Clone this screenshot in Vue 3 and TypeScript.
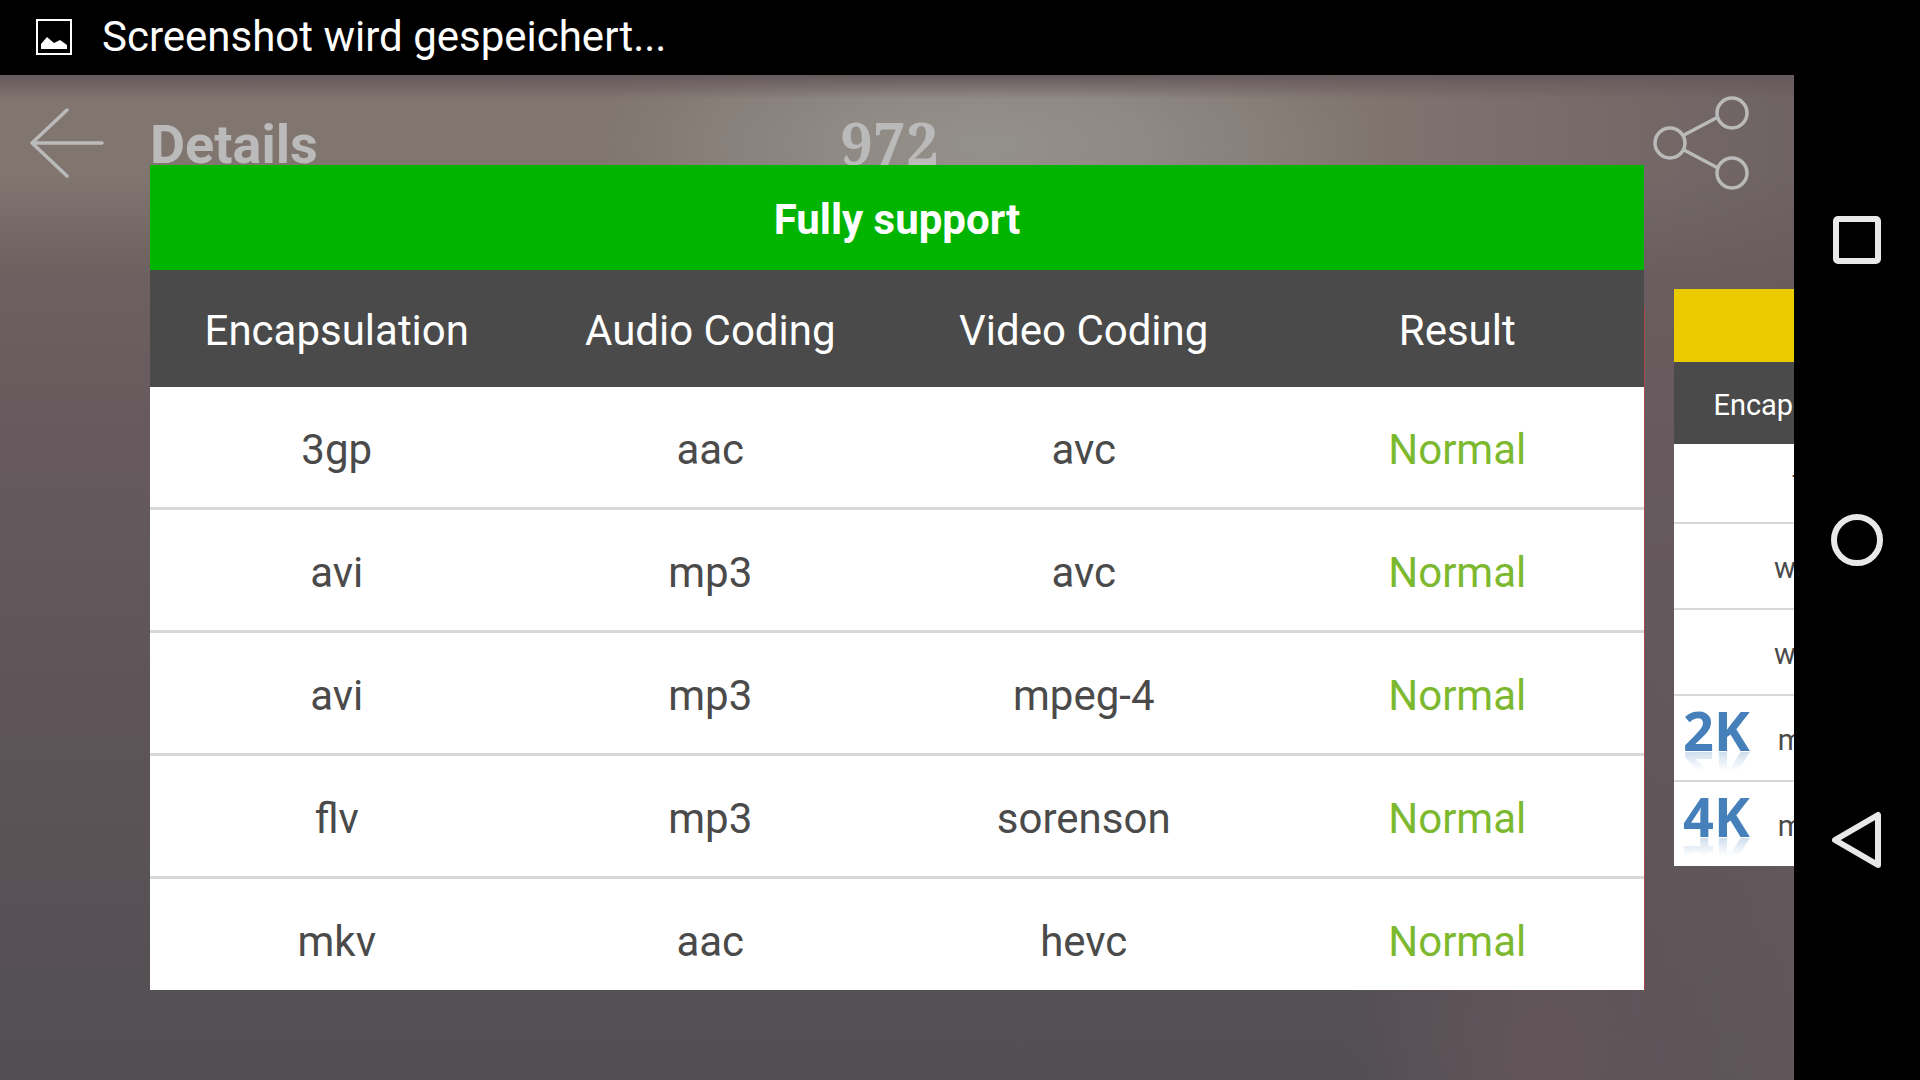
<script setup lang="ts">
interface Row {
  format: string
  audio: string
  video: string
  result: string
  badge?: string
}

const columns: string[] = ['Encapsulation', 'Audio Coding', 'Video Coding', 'Result']

const supported: Row[] = [
  { format: '3gp', audio: 'aac', video: 'avc', result: 'Normal' },
  { format: 'avi', audio: 'mp3', video: 'avc', result: 'Normal' },
  { format: 'avi', audio: 'mp3', video: 'mpeg-4', result: 'Normal' },
  { format: 'flv', audio: 'mp3', video: 'sorenson', result: 'Normal' },
  { format: 'mkv', audio: 'aac', video: 'hevc', result: 'Normal' },
]

// Only the first column of the next card peeks in from the right.
const partial: Pick<Row, 'format' | 'badge'>[] = [
  { format: 'ts' },
  { format: 'wmv' },
  { format: 'wmv' },
  { format: 'mkv', badge: '2K' },
  { format: 'mkv', badge: '4K' },
]
</script>

<template>
  <div class="screen">
    <header class="status">
      <svg class="status-icon" viewBox="0 0 36 36" aria-hidden="true">
        <rect x="1" y="1" width="34" height="34" fill="none" stroke="#fff" stroke-width="2" />
        <path d="M5 30V25L11 18L18 24L24 21L31 26V30Z" fill="#fff" />
      </svg>
      <span>Screenshot wird gespeichert...</span>
    </header>

    <main class="stage">
      <div class="appbar">
        <div class="appbar-left">
          <button class="icon-btn" type="button" aria-label="Back">
            <svg width="75" height="72" viewBox="0 0 75 72">
              <path d="M37 3L2 36L37 69M2 36H72" fill="none" stroke="#bababa" stroke-width="3.5" stroke-linecap="round" stroke-linejoin="round" />
            </svg>
          </button>
          <h1 class="title">Details</h1>
        </div>
        <span class="score">972</span>
        <button class="icon-btn share" type="button" aria-label="Share">
          <svg width="96" height="94" viewBox="0 0 96 94">
            <g fill="none" stroke="#bababa" stroke-width="3.5">
              <circle cx="17" cy="47" r="15" />
              <circle cx="79" cy="17" r="15" />
              <circle cx="79" cy="77" r="15" />
              <path d="M31 39L65 21M31 54L65 72" />
            </g>
          </svg>
        </button>
      </div>

      <div class="carousel">
        <section class="card main-card">
          <div class="clip">
            <table>
              <caption>Fully support</caption>
              <thead>
                <tr><th v-for="c in columns" :key="c" scope="col">{{ c }}</th></tr>
              </thead>
              <tbody>
                <tr v-for="(r, i) in supported" :key="i">
                  <td>{{ r.format }}</td>
                  <td>{{ r.audio }}</td>
                  <td>{{ r.video }}</td>
                  <td class="ok">{{ r.result }}</td>
                </tr>
              </tbody>
            </table>
          </div>
        </section>

        <section class="card side-card">
          <div class="clip">
            <table>
              <caption></caption>
              <thead>
                <tr>
                  <th scope="col">{{ columns[0] }}</th>
                  <th colspan="3"></th>
                </tr>
              </thead>
              <tbody>
                <tr v-for="(r, i) in partial" :key="i">
                  <td>
                    <span v-if="r.badge" class="badge">{{ r.badge }}</span>
                    {{ r.format }}
                  </td>
                  <td colspan="3"></td>
                </tr>
              </tbody>
            </table>
          </div>
        </section>
      </div>
    </main>

    <nav class="nav">
      <button type="button" aria-label="Recent apps">
        <svg width="60" height="60" viewBox="0 0 60 60">
          <rect x="9" y="9" width="42" height="42" rx="2" fill="none" stroke="#e8e8e8" stroke-width="6" />
        </svg>
      </button>
      <button type="button" aria-label="Home">
        <svg width="60" height="60" viewBox="0 0 60 60">
          <circle cx="30" cy="30" r="23" fill="none" stroke="#e8e8e8" stroke-width="6" />
        </svg>
      </button>
      <button type="button" aria-label="Back">
        <svg width="60" height="60" viewBox="0 0 60 60">
          <path d="M51 5V55L8 30Z" fill="none" stroke="#e8e8e8" stroke-width="6" stroke-linejoin="round" />
        </svg>
      </button>
    </nav>
  </div>
</template>

<style>
body {
  margin: 0;
  background: #000;
}
</style>

<style scoped>
.screen {
  display: grid;
  grid-template: 75px minmax(0, 1fr) / minmax(0, 1fr) 126px;
  height: 100vh;
  font-family: Roboto, "Liberation Sans", sans-serif;
  font-size: 42px;
  color: #4a4a4a;
  background: #000;
}

button {
  border: 0;
  padding: 0;
  background: none;
}

svg {
  display: block;
}

.status {
  grid-column: 1 / -1;
  display: flex;
  align-items: center;
  gap: 30px;
  padding: 0 36px 2px;
  color: #fff;
}

.status-icon {
  width: 36px;
  height: 36px;
}

.stage {
  display: flex;
  flex-direction: column;
  min-height: 0;
  overflow: hidden;
  background:
    linear-gradient(#66595c 0, #66595c00 24px),
    radial-gradient(ellipse 22% 15% at 55% 7%, #94908a 0, #94908ac0 40%, #94908a00 100%),
    radial-gradient(ellipse 10% 24% at 86% 98%, #62555a 0, #62555a00 100%),
    linear-gradient(90deg, #80756f00 75%, #665a5eb0 100%),
    linear-gradient(#80756f 0, #80756f 10%, #6c6060 20%, #665a5e 35%, #5f5558 60%, #575155 85%, #524e52 100%);
}

.appbar {
  display: grid;
  grid-template-columns: 1fr auto 1fr;
  align-items: center;
  height: 135px;
  flex: none;
  padding: 0 45px 0 30px;
  color: #bababa;
}

.appbar-left {
  display: flex;
  align-items: center;
  gap: 45px;
}

.title {
  margin: 0;
  padding-top: 3px;
  font-size: 54px;
  font-weight: 700;
}

.score {
  font: 700 58px "Noto Serif", "Liberation Serif", serif;
}

.share {
  justify-self: end;
}

.carousel {
  position: relative;
  display: flex;
  flex: 1;
  align-items: center;
  gap: 30px;
  min-height: 0;
  margin-top: -45px;
  padding: 0 150px 90px;
}

.card {
  position: relative;
  flex: none;
}

.main-card {
  width: 100%;
  height: 100%;
}

.main-card::after {
  content: "";
  position: absolute;
  top: 142px;
  bottom: 0;
  left: 100%;
  width: 1px;
  background: #b04548;
}

.side-card {
  width: 70%;
  height: 70%;
  font-size: 29px;
}

.clip {
  height: 100%;
  overflow: hidden;
  background: #fff;
}

table {
  width: 100%;
  table-layout: fixed;
  border-collapse: separate;
  border-spacing: 0;
  text-align: center;
}

caption {
  height: 105px;
  line-height: 110px;
  font-weight: 700;
  color: #fff;
  background: #00b400;
}

th {
  box-sizing: border-box;
  height: 117px;
  padding: 4px 0 0;
  font-weight: 400;
  color: #fff;
  background: #4a4a4a;
}

td {
  position: relative;
  box-sizing: border-box;
  height: 123px;
  padding: 4px 0 0;
  border-bottom: 3px solid #d8d8d8;
}

.ok {
  color: #7cb92f;
}

.side-card caption {
  height: 73px;
  background: #e9cb00;
}

.side-card th {
  width: 25%;
  height: 82px;
}

.side-card th:last-child {
  width: 75%;
}

.side-card td {
  height: 86px;
  border-bottom-width: 2px;
}

.side-card tr:first-child td {
  height: 80px;
  padding: 0 0 4px;
}

.badge {
  position: absolute;
  left: 9px;
  top: 7px;
  font: 700 54px/54px "Open Sans", "Noto Sans", sans-serif;
  color: #4580bb;
  -webkit-box-reflect: below -11px linear-gradient(transparent 55%, #0004 90%);
}

.nav {
  display: flex;
  flex-direction: column;
  padding: 15px 0 90px;
}

.nav button {
  display: flex;
  flex: 1;
  align-items: center;
  justify-content: center;
}
</style>
